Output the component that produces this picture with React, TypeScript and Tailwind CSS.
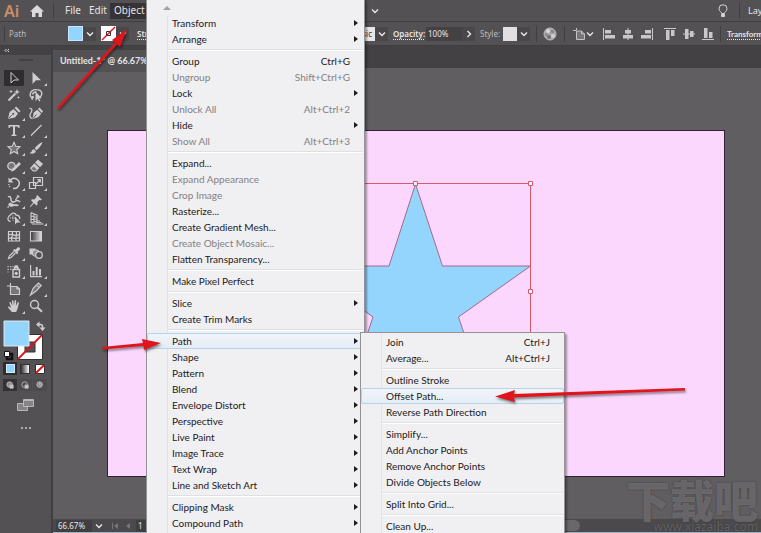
import { useState } from 'react';
import type { ReactNode } from 'react';
import clsx from 'clsx';

type Entry = { label: string; keys?: string; more?: boolean; off?: boolean } | null;

const objectMenu: Entry[] = [
  { label: 'Transform', more: true },
  { label: 'Arrange', more: true },
  null,
  { label: 'Group', keys: 'Ctrl+G' },
  { label: 'Ungroup', keys: 'Shift+Ctrl+G', off: true },
  { label: 'Lock', more: true },
  { label: 'Unlock All', keys: 'Alt+Ctrl+2', off: true },
  { label: 'Hide', more: true },
  { label: 'Show All', keys: 'Alt+Ctrl+3', off: true },
  null,
  { label: 'Expand...' },
  { label: 'Expand Appearance', off: true },
  { label: 'Crop Image', off: true },
  { label: 'Rasterize...' },
  { label: 'Create Gradient Mesh...' },
  { label: 'Create Object Mosaic...', off: true },
  { label: 'Flatten Transparency...' },
  null,
  { label: 'Make Pixel Perfect' },
  null,
  { label: 'Slice', more: true },
  { label: 'Create Trim Marks' },
  null,
  { label: 'Path', more: true },
  { label: 'Shape', more: true },
  { label: 'Pattern', more: true },
  { label: 'Blend', more: true },
  { label: 'Envelope Distort', more: true },
  { label: 'Perspective', more: true },
  { label: 'Live Paint', more: true },
  { label: 'Image Trace', more: true },
  { label: 'Text Wrap', more: true },
  { label: 'Line and Sketch Art', more: true },
  null,
  { label: 'Clipping Mask', more: true },
  { label: 'Compound Path', more: true },
];

const pathMenu: Entry[] = [
  { label: 'Join', keys: 'Ctrl+J' },
  { label: 'Average...', keys: 'Alt+Ctrl+J' },
  null,
  { label: 'Outline Stroke' },
  { label: 'Offset Path...' },
  { label: 'Reverse Path Direction' },
  null,
  { label: 'Simplify...' },
  { label: 'Add Anchor Points' },
  { label: 'Remove Anchor Points' },
  { label: 'Divide Objects Below' },
  null,
  { label: 'Split Into Grid...' },
  null,
  { label: 'Clean Up...' },
];

// every tool glyph sits on a 16x16 grid
const tools: { name: string; plain?: boolean; icon: ReactNode }[] = [
  { name: 'Selection', plain: true, icon: <path d="M5 2.500v10.500l3-3h4.500z" fill="none" stroke="currentColor" /> },
  { name: 'Direct Selection', icon: <path d="M4.500 2v12l3.500-3.800h5z" /> },
  {
    name: 'Magic Wand',
    plain: true,
    icon: (
      <>
        <path d="M2.500 13.500l7-7" stroke="currentColor" strokeWidth="2" />
        <path d="M11 2l.8 2.200 2.200.8-2.200.8-.8 2.200-.8-2.200L7.800 5l2.200-.8zM5 2.500l.5 1.500 1.500.5-1.500.5L5 6.500 4.500 5 3 4.500 4.500 4zM12.500 9l.4 1.100 1.100.4-1.100.4-.4 1.100-.4-1.100-1.100-.4 1.100-.4z" />
      </>
    ),
  },
  {
    name: 'Lasso',
    plain: true,
    icon: (
      <>
        <path d="M6 10.500C3 11 1.800 9.500 2.200 7 2.800 4 5.500 2.500 8.500 2.600c3.500 0 5.500 1.700 5.300 4.400-.2 1.500-.8 2.500-2 3.200M5 12c-1.800.8-1.800-2.500.5-2.500M4.500 7.500C5 5.500 7 4.800 8.500 5" fill="none" stroke="currentColor" strokeWidth="1.400" />
        <path d="M7.500 4.500v9.500l2.300-2.200 1.400 2.700 1.200-.6-1.200-2.600h2.600z" />
      </>
    ),
  },
  {
    name: 'Pen',
    icon: (
      <>
        <path d="M2 14l1.600-7 4-3 4.400 4.400-3 4z" />
        <path d="M8.600 3l1.500-1.500 4.400 4.400L13 7.400z" />
        <path d="M2.500 13.500l4-4" stroke="#535154" strokeWidth=".9" />
        <circle cx="7.300" cy="8.800" r="1" fill="#535154" />
      </>
    ),
  },
  {
    name: 'Curvature',
    plain: true,
    icon: (
      <>
        <path d="M4.500 14l1.200-6.500 3.500-2.700 4 4-3 3.500z" />
        <path d="M10 4l1.500-1.500 3.500 3.800L13.800 8z" />
        <path d="M1.500 3.500c3.500-.5 2.500 2.500 1.300 4.500S1 13 4.500 13.500" fill="none" stroke="currentColor" strokeWidth="1.300" />
        <path d="M5 13.500l3.500-4" stroke="#535154" strokeWidth=".9" />
      </>
    ),
  },
  { name: 'Type', icon: <path d="M2.500 3h11v3h-1.200c-.2-1.200-.6-1.600-2-1.600H9v7.300c0 .9.300 1.100 1.500 1.200V14h-5v-1.100C6.700 12.800 7 12.600 7 11.700V4.400H5.700c-1.400 0-1.800.4-2 1.600H2.500z" /> },
  { name: 'Line Segment', icon: <path d="M3 13.500L13.500 3" stroke="currentColor" strokeWidth="1.300" /> },
  { name: 'Star', icon: <path d="M8 2.300l1.700 3.900 4.300.4-3.200 2.900.9 4.200L8 11.500l-3.700 2.200.9-4.200L2 6.600l4.300-.4z" fill="#777578" stroke="currentColor" strokeWidth="1.100" /> },
  { name: 'Paintbrush', icon: <path d="M14 2.200c-2.600 1-5.500 3.600-7.300 6.300l1.800 1.800c2.700-1.900 4.900-4.900 5.900-7.700zM6 9.200c-2 .1-2 1.600-2.600 2.600-.4.7-.9 1-1.900 1.300 2.300 1.300 6 .7 6.300-2.100z" /> },
  {
    name: 'Shaper',
    icon: (
      <>
        <circle cx="5.500" cy="8" r="3.700" fill="#777578" stroke="currentColor" strokeWidth="1.300" />
        <path d="M5 13.800l1.400-3L13 4l2 2-6.700 6.600z" />
      </>
    ),
  },
  {
    name: 'Eraser',
    icon: (
      <>
        <path d="M7 4.500l3-3L15 6l-3 3.300z" />
        <path d="M6.300 5.300l5 4.600L8 13.500H5L2 10.200z" />
        <path d="M3.500 10.400l2 2.200h2l1.200-1.200-3-2.900z" fill="#777578" />
      </>
    ),
  },
  {
    name: 'Rotate',
    icon: (
      <>
        <path d="M4.300 5.200A5 5 0 1 1 7 13.200" fill="none" stroke="currentColor" strokeWidth="1.500" />
        <path d="M4 12a5 5 0 0 1-1.200-3" fill="none" stroke="currentColor" strokeWidth="1.300" strokeDasharray="1.200 1" />
        <path d="M2.500 2.500v5h5z" />
      </>
    ),
  },
  {
    name: 'Scale',
    icon: (
      <g fill="none" stroke="currentColor" strokeWidth="1.200">
        <path d="M5.500 2.500h9v8h-9zM1.500 7.500h6v6h-6z" />
        <path d="M8 9l4-4M9.500 4.700h2.800v2.800" />
      </g>
    ),
  },
  {
    name: 'Width',
    icon: (
      <>
        <path d="M2 4c2-1.500 3 .5 3 2.500S7 10 9 8.500s3-1.500 5 .5" fill="none" stroke="currentColor" strokeWidth="1.500" />
        <path d="M2 11.500c2-3 3.500-1.500 5-.5s3.500-.6 6 1.200c-2 1.600-3.500.6-5 1S4 14.800 2 11.500z" />
        <path d="M9.500 7l3-4.500M11 2.500l2.500 1.700M3 13.500l-1.500 1" stroke="currentColor" strokeWidth="1.300" />
      </>
    ),
  },
  { name: 'Puppet Warp', icon: <path d="M9.200 2l4.800 4.700-1.400.5-1.300-.2-2 2.200.2 2.500-1 .8-2.500-2.300L2.500 14l-.6-.6 3.300-4L3 7.200l.8-1 2.500.2 2.200-2.100-.1-1.400z" /> },
  {
    name: 'Shape Builder',
    icon: (
      <>
        <path d="M4.500 11.500C2 11 1.300 8.800 2.500 7 3.500 5 5 5 5.500 3.800 7 2.500 9.500 3 10 5c3 0 4 2 3.600 4" fill="none" stroke="currentColor" strokeWidth="1.300" />
        <path d="M4 8h5M7 5.500v5" stroke="currentColor" strokeWidth="1" strokeDasharray="1.200 .9" />
        <path d="M9 6.500v8l2-2h3.500z" />
      </>
    ),
  },
  {
    name: 'Perspective Grid',
    icon: (
      <g fill="none" stroke="currentColor" strokeWidth="1.100">
        <path d="M3 2.500v10.500M3 2.500l6 2.500v6L3 13M6 3.700v8.200M3 6l6 1M3 9.500l6-.5" />
        <path d="M4 14h11.500M9 11h3M8 12.500h5.500" />
      </g>
    ),
  },
  {
    name: 'Mesh',
    plain: true,
    icon: (
      <g fill="none" stroke="currentColor" strokeWidth="1.200">
        <path d="M2.500 3.500h11v9.500h-11z" />
        <path d="M2.500 7c4-2.500 6 2.500 11-.5M2.500 10.500c4-2 6 1.500 11-1M6 3.500c2.500 3-2 6 0 9.500M10 3.500c2.500 3-2 6 .5 9.500" />
      </g>
    ),
  },
  {
    name: 'Gradient',
    plain: true,
    icon: (
      <>
        <linearGradient id="tool-fade">
          <stop stopColor="#353336" />
          <stop offset="1" stopColor="#e4e2e5" />
        </linearGradient>
        <path d="M2.500 3.500h11V13h-11z" fill="url(#tool-fade)" stroke="currentColor" strokeWidth="1.100" />
      </>
    ),
  },
  {
    name: 'Eyedropper',
    icon: (
      <>
        <path d="M8 6.500L3.300 11.200 2.500 13.500l2.300-.8L9.500 8" fill="none" stroke="currentColor" strokeWidth="1.200" />
        <path d="M7 5l1.200-1 1.300.8 2-2.200c1.400-1.200 3.400.7 2.300 2.200l-2.300 2 .8 1.300-1.200 1.200z" />
      </>
    ),
  },
  {
    name: 'Blend',
    plain: true,
    icon: (
      <>
        <path d="M1.500 3.500h6v6h-6z" />
        <rect x="4.500" y="5" width="6.500" height="6" rx="2" fill="#929093" stroke="currentColor" />
        <circle cx="11" cy="10" r="3.300" fill="#535154" stroke="currentColor" strokeWidth="1.300" />
      </>
    ),
  },
  {
    name: 'Symbol Sprayer',
    icon: (
      <>
        <path d="M7 6.500h6.500V14H7zM8.500 6.200V4.500H12v1.700M8.700 3h2.500v1.500" fill="none" stroke="currentColor" strokeWidth="1.400" />
        <circle cx="10.200" cy="10.300" r="1.600" />
        <path d="M1.500 3h1.200v1.200H1.500zM4.200 3h1.200v1.200H4.200zM6.500 3h1v1h-1zM1.500 5.700h1.200v1.200H1.500zM4.200 5.700h1.200v1.200H4.200zM1.500 8.400h1v1h-1z" />
      </>
    ),
  },
  { name: 'Column Graph', icon: <path d="M2 2h1.200v11H14v1.200H2zM4.500 8h2v4.500h-2zM7.700 4h2v8.500h-2zM11 6h2v6.500h-2z" /> },
  {
    name: 'Artboard',
    plain: true,
    icon: (
      <g fill="none" stroke="currentColor" strokeWidth="1.200">
        <path d="M1 5h3.500M4.500 2v3" />
        <path d="M4.500 5.500H11L13.500 8v5.500h-9z" fill="#777578" />
        <path d="M11 5.500V8h2.500" />
      </g>
    ),
  },
  { name: 'Slice', icon: <path d="M2.500 14l2.700-6.700L10.500 2l2.700 2.600-5.100 5.500zM9.400 4.600l1.800 1.800" fill="#777578" stroke="currentColor" strokeWidth="1.200" /> },
  { name: 'Hand', icon: <path d="M5.800 14L2 9.500c-.5-.8.600-1.500 1.300-.8L5 10 3.500 5c-.2-1 1-1.300 1.400-.4L6.300 8 6 3c0-1 1.400-1 1.500 0L8 7.500l.8-4.900c.2-1 1.500-.7 1.400.2L9.900 8l1.700-3.500c.4-.8 1.600-.3 1.300.6L11.500 11l-1.400 3z" /> },
  {
    name: 'Zoom',
    plain: true,
    icon: (
      <>
        <circle cx="6.500" cy="6.500" r="4" fill="none" stroke="currentColor" strokeWidth="1.400" />
        <path d="M9.500 9.500l4.500 4.300" stroke="currentColor" strokeWidth="2" />
      </>
    ),
  },
];

// bars of the six align buttons, on a 12x12 grid
const aligns = [
  { name: 'Align left', d: 'M0 0h1v12H0zM2 2h6v3.500H2zM2 7h10v3.500H2z' },
  { name: 'Align centre', d: 'M5.500 0h1v12h-1zM3 2h6v3.500H3zM1 7h10v3.500H1z' },
  { name: 'Align right', d: 'M11 0h1v12h-1zM4 2h6v3.500H4zM0 7h10v3.500H0z' },
  { name: 'Align top', d: 'M0 0h12v1H0zM2 2h3.500v10H2zM7 2h3.500v6H7z' },
  { name: 'Align middle', d: 'M0 5.500h12v1H0zM2 1h3.500v10H2zM7 3h3.500v6H7z' },
  { name: 'Align bottom', d: 'M0 11h12v1H0zM2 0h3.500v10H2zM7 4h3.500v6H7z' },
];

const Chevron = ({ right }: { right?: boolean }) => (
  <svg viewBox="0 0 8 8" className={clsx('size-2', right && '-rotate-90')} fill="none" stroke="#e8e6e9" strokeWidth="1.400">
    <path d="M1 2.500l3 3 3-3" />
  </svg>
);

const DropButton = ({ label, right }: { label: string; right?: boolean }) => (
  <button aria-label={label} className="flex h-[14px] w-[13px] shrink-0 items-center justify-center bg-[#49474a]">
    <Chevron right={right} />
  </button>
);

const Rule = ({ className }: { className?: string }) => (
  <span className={clsx('h-4 w-px shrink-0 bg-[#403e41]', className)} />
);

const MenuList = ({ items, active, children }: { items: Entry[]; active: string; children?: ReactNode }) => (
  <ul>
    {items.map((item, i) =>
      item === null ? (
        <li key={i} className="flex h-[6px] items-center pl-[21px] pr-px">
          <span className="h-[2px] w-full border-t border-[#e0dfe1] bg-white" />
        </li>
      ) : (
        <li key={item.label} className="relative">
          <button
            disabled={item.off}
            className={clsx(
              'flex h-4 w-full items-center rounded-[2px] border pl-6 pr-[5px] text-left whitespace-nowrap',
              item.label === active ? 'border-[#b4d3ee] bg-linear-to-b from-[#f1f4f9] to-[#e5edf6]' : 'border-transparent',
              item.off ? 'text-[#838184]' : 'text-[#1c1a1d]'
            )}
          >
            <span>{item.label}</span>
            <span className={clsx('ml-auto', !item.more && 'mr-2')}>{item.keys}</span>
            {item.more && (
              <svg viewBox="0 0 4 6" className="h-[6px] w-1" fill="#1c1a1d">
                <path d="M0 0l4 3-4 3z" />
              </svg>
            )}
          </button>
          {item.label === active && children}
        </li>
      )
    )}
  </ul>
);

const Toolbar = () => {
  const [tool, setTool] = useState('Selection');
  return (
    <aside className="flex w-[53px] shrink-0 flex-col border-r-2 border-[#413f42] bg-[#535154] text-[#cfcdd0]">
      <div className="h-[9px] bg-[#434144] pl-1">
        <svg viewBox="0 0 6 9" className="h-[9px] w-[6px]" fill="none" stroke="#dddbde">
          <path d="M2.500 3L1 4.500 2.500 6M5 3L3.500 4.500 5 6" />
        </svg>
      </div>
      <div className="flex h-[14px] items-center justify-center">
        <span className="mb-1 h-[2px] w-[14px] bg-[#434144]" />
      </div>
      <div className="ml-[3px] grid h-[246px] w-[44px] grid-cols-2 place-items-center">
        {tools.map(t => (
          <button
            key={t.name}
            title={t.name}
            onClick={() => setTool(t.name)}
            className={clsx('relative flex h-4 w-5 items-center justify-center rounded-[1px]', tool === t.name && 'bg-[#2f2d30]')}
          >
            <svg viewBox="0 0 16 16" className="size-4" fill="currentColor">
              {t.icon}
            </svg>
            {!t.plain && (
              <svg viewBox="0 0 3 3" className="absolute -right-px bottom-0 size-[3px]" fill="currentColor">
                <path d="M3 0v3H0z" />
              </svg>
            )}
          </button>
        ))}
      </div>

      <svg viewBox="0 0 44 42" className="ml-[3px] mt-[5px] h-[42px] w-[44px]" fill="none">
        <path d="M14.500 14.500h25v25h-25z" fill="#fff" stroke="#333134" />
        <path d="M22 22h10v10H22z" fill="#535154" stroke="#333134" />
        <path d="M15 39L39 15" stroke="#d8151c" strokeWidth="1.800" />
        <path d="M1 1h25v25H1z" fill="#93d5fd" stroke="#e5e5e8" />
        <path d="M36 4.500h1.500a2 2 0 0 1 2 2V8" stroke="#cfcdd0" strokeWidth="1.500" />
        <path d="M36.500 1.500v6l-3.500-3zM36.500 7.500h6l-3 3.500z" fill="#cfcdd0" />
        <path d="M4 34h5v5H4z" stroke="#111" strokeWidth="2.500" />
        <path d="M1.500 31.500h5v5h-5z" fill="#fff" stroke="#111" />
      </svg>

      <div className="ml-[3px] flex gap-px">
        <button aria-label="Color" className="flex h-[13px] w-[14px] items-center justify-center bg-[#2f2d30]">
          <span className="size-[9px] border border-[#cdebff] bg-[#93d5fd]" />
        </button>
        <button aria-label="Gradient" className="flex h-[13px] w-[14px] items-center justify-center">
          <span className="size-[10px] border border-[#333134] bg-linear-to-r from-[#333134] to-white" />
        </button>
        <button aria-label="None" className="flex h-[13px] w-[14px] items-center justify-center">
          <svg viewBox="0 0 10 10" className="size-[10px]">
            <path d="M.5.5h9v9h-9z" fill="#fff" stroke="#333134" />
            <path d="M1 9l8-8" stroke="#d8151c" strokeWidth="2" />
          </svg>
        </button>
      </div>
      <div className="ml-[3px] mt-1 flex gap-px">
        {['Draw Normal', 'Draw Behind', 'Draw Inside'].map((mode, i) => (
          <button key={mode} aria-label={mode} className={clsx('flex h-3 w-[14px] items-center justify-center', i === 0 ? 'bg-[#343235]' : 'bg-[#4d4b4e]')}>
            <svg viewBox="0 0 10 10" className="size-2" fill="#8d8b8e" stroke="#c4c2c5">
              <circle cx="4.500" cy="4.500" r="3.500" fill={i === 1 ? 'none' : '#8d8b8e'} />
              {i < 2 ? <path d="M5 5h4v4H5z" fill="#c4c2c5" /> : <path d="M4.500 2v3H7z" fill="#535154" />}
            </svg>
          </button>
        ))}
      </div>
      <button aria-label="Screen mode" className="mt-2 self-center">
        <svg viewBox="0 0 17 12" className="h-3 w-[17px]" fill="#858386" stroke="#b9b7ba">
          <path d="M.5 4.500h10v7H.5z" />
          <path d="M6.500.5h10v7h-10zM6.500 1.500h10" />
        </svg>
      </button>
      <button aria-label="Edit toolbar" className="mt-4 flex gap-[2px] self-center">
        <span className="size-[2px] rounded-full bg-[#cfcdd0]" />
        <span className="size-[2px] rounded-full bg-[#cfcdd0]" />
        <span className="size-[2px] rounded-full bg-[#cfcdd0]" />
      </button>
    </aside>
  );
};

const ControlBar = () => (
  <div className="flex h-6 shrink-0 items-center overflow-hidden border-b border-[#403e41] bg-[#535154] text-[8px] whitespace-nowrap text-[#e6e4e7]">
    <Rule className="ml-1 mr-1" />
    <span className="w-[59px] shrink-0 text-[#bcbabd]">Path</span>
    <button aria-label="Fill" className="size-[15px] shrink-0 border border-[#c5e8fd] bg-[#93d5fd]" />
    <DropButton label="Fill options" />
    <button aria-label="Stroke color" className="ml-[5px] shrink-0">
      <svg viewBox="0 0 15 15" className="size-[15px]">
        <path d="M0 0h15v15H0z" fill="#fff" />
        <path d="M5.500 5.500h4v4h-4z" fill="none" stroke="#333134" />
        <path d="M1 14L14 1" stroke="#d8151c" strokeWidth="1.500" />
      </svg>
    </button>
    <DropButton label="Stroke options" />
    <button className="ml-2 w-[220px] shrink-0 text-left font-semibold underline decoration-dotted underline-offset-2">Stroke:</button>
    <span className="flex h-[14px] w-[18px] shrink-0 items-center justify-end bg-[#e8e6e9] pr-[3px] text-[#333134]">Basic</span>
    <DropButton label="Brush definition" />
    <label htmlFor="opacity" className="ml-[5px] w-[33px] shrink-0 font-semibold underline decoration-dotted underline-offset-2">Opacity:</label>
    <input id="opacity" defaultValue="100%" className="h-[14px] w-9 shrink-0 bg-[#434144] pl-[2px] outline-none" />
    <DropButton label="Opacity slider" right />
    <span className="ml-[5px] w-[23px] shrink-0 text-[#bcbabd]">Style:</span>
    <button aria-label="Style" className="size-[14px] shrink-0 bg-[#e1dfe2]" />
    <DropButton label="Style options" />
    <Rule className="mx-[6px]" />
    <button aria-label="Recolor artwork" className="shrink-0">
      <svg viewBox="0 0 14 14" className="size-[14px]">
        <circle cx="7" cy="7" r="6" fill="#aaa8ab" stroke="#b9b7ba" />
        <circle cx="5" cy="4" r="2" fill="#d9d7da" />
        <circle cx="9.500" cy="4.500" r="1.800" fill="#8b898c" />
        <circle cx="10" cy="9" r="2" fill="#d0ced1" />
        <circle cx="6" cy="10" r="2" fill="#737174" />
        <circle cx="3.300" cy="7.500" r="1.500" fill="#8b898c" />
      </svg>
    </button>
    <Rule className="mx-[7px]" />
    <button aria-label="Align to" className="flex shrink-0 items-center">
      <svg viewBox="0 0 14 14" className="size-[14px]" fill="none" stroke="#c4c2c5">
        <path d="M1 3.500h3M4.500 1v2.500" />
        <path d="M4.500 4h5l3 3v5.500h-8z" fill="#777578" />
        <path d="M9.500 4v3h3" />
      </svg>
      <Chevron />
    </button>
    <div className="ml-[9px] flex shrink-0 gap-[7px]">
      {aligns.map((a, i) => (
        <button key={a.name} aria-label={a.name} className={clsx(i === 3 && 'ml-1')}>
          <svg viewBox="0 0 12 12" className="size-3" fill="#c9c7ca">
            <path d={a.d} />
          </svg>
        </button>
      ))}
    </div>
    <Rule className="mx-[6px]" />
    <button className="shrink-0 font-['Lato',sans-serif] font-bold underline decoration-dotted underline-offset-2">Transform</button>
  </div>
);

const Artboard = () => (
  <div className="relative ml-[54px] mr-9 mt-[62px] h-[347px] border border-[#33203a] bg-[#fcd7fd]">
    <svg viewBox="0 0 236 224" className="absolute left-[190px] top-[49px] h-[224px] w-[236px]" fill="none" stroke="#d9596c">
      <path d="M117.500 4L144.500 86h88l-72 51 28 84-71-51.500L47 221l28-84L4 86h87z" fill="#93d5fd" stroke="#a9688c" />
      <path d="M3.500 3.500h229v218H3.500z" />
      <g fill="#fff">
        <path d="M1.500 1.500h4v4h-4zM115.500 1.500h4v4h-4zM230.500 1.500h4v4h-4zM230.500 109.500h4v4h-4zM1.500 109.500h4v4h-4z" />
        <path d="M1.500 219.500h4v4h-4zM115.500 219.500h4v4h-4zM230.500 219.500h4v4h-4z" />
      </g>
    </svg>
  </div>
);

const App = () => (
  <div className="relative flex h-screen flex-col overflow-hidden bg-[#605e61] font-['Noto_Sans',sans-serif]">
    <header className="flex h-[22px] shrink-0 items-center border-b border-[#403e41] bg-[#535154] text-[10px] whitespace-nowrap text-[#e6e4e7]">
      <span className="ml-1 w-[26px] text-base leading-4 font-semibold text-[#c98d6c]">Ai</span>
      <button aria-label="Home">
        <svg viewBox="0 0 14 12" className="h-3 w-[14px]" fill="#dbd9dc">
          <path d="M7 0l7 6.500h-2V12H8.500V8h-3v4H2V6.500H0z" />
        </svg>
      </button>
      <Rule className="ml-[9px] mr-[11px]" />
      <nav className="flex w-[298px] items-center">
        <button className="w-6 text-left">File</button>
        <button className="w-[21px] text-left">Edit</button>
        <button className="h-4 bg-[#353336] px-1">Object</button>
        <button className="px-2">Type</button>
      </nav>
      <button aria-label="Arrange documents" className="ml-2 flex items-center">
        <Chevron />
      </button>
      <button aria-label="Learn" className="ml-auto">
        <svg viewBox="0 0 10 14" className="h-[14px] w-[10px]" fill="none" stroke="#d5d3d6">
          <path d="M3.500 9.500C3.500 7.500 1 7.500 1 4.700a4 4 0 0 1 8 0c0 2.800-2.500 2.800-2.500 4.800z" />
          <path d="M3.500 10.500h3v2h-3z" fill="#d5d3d6" />
        </svg>
      </button>
      <Rule className="ml-[11px] mr-2" />
      <button className="w-[13px] overflow-hidden text-left text-[9px]">Layout</button>
    </header>

    <ControlBar />

    <div className="flex min-h-0 flex-1">
      <Toolbar />
      <main className="flex min-w-0 flex-1 flex-col">
        <div className="h-[22px] shrink-0 bg-[#434144]">
          <button className="h-[22px] bg-[#535154] pl-[7px] pr-3 font-['Lato',sans-serif] text-[9px] font-bold text-[#e6e4e7]">Untitled-1* @ 66.67% (RGB/Preview)</button>
        </div>
        <div className="min-h-0 flex-1 overflow-hidden">
          <Artboard />
        </div>
        <footer className="flex h-[14px] shrink-0 items-center border-b border-[#9fb3c4] bg-[#4b494c] text-[8px] text-[#e6e4e7]">
          <input aria-label="Zoom level" defaultValue="66.67%" className="ml-[3px] h-3 w-9 bg-[#403e41] pl-[2px] outline-none" />
          <button aria-label="Zoom presets" className="flex h-3 w-[14px] items-center justify-center">
            <Chevron />
          </button>
          <svg viewBox="0 0 20 8" className="ml-[6px] h-2 w-5" fill="#777578">
            <path d="M0 1h1v6H0zM6 1v6L2 4zM18 1v6l-4-3z" />
          </svg>
          <input aria-label="Artboard number" defaultValue="1" className="ml-1 h-3 w-6 bg-[#403e41] pl-[2px] outline-none" />
          <span className="ml-auto mr-[181px] h-[11px] w-[300px] rounded-full bg-[#69676a]" />
        </footer>
      </main>
    </div>

    <div className="pointer-events-none absolute right-[3px] bottom-0 text-right text-[#858386]/60">
      <p className="font-['Noto_Sans_CJK_SC',sans-serif] text-[44px] leading-[44px] font-black [text-shadow:0_0_2px_#3c3a3d]">下载吧</p>
      <p className="text-xs leading-3 [text-shadow:0_0_1px_#2c2a2d]">www.xiazaiba.com</p>
    </div>

    <div className="absolute inset-y-0 left-[146px] w-[219px] border-x border-[#949295] bg-[#f0eff1] font-['Lato',sans-serif] text-[10px] leading-[14px] shadow-[2px_0_2px_rgba(0,0,0,0.35)]">
      <span className="absolute top-4 bottom-0 left-5 w-px bg-[#e2e1e3]" />
      <div className="flex h-[15px] items-center pl-4">
        <svg viewBox="0 0 8 4" className="h-1 w-2" fill="#a3a1a4">
          <path d="M4 0l4 4H0z" />
        </svg>
      </div>
      <MenuList items={objectMenu} active="Path">
        <div className="absolute -top-px left-[213px] z-10 h-[220px] w-[205px] border border-[#949295] bg-[#f0eff1] py-px shadow-[2px_2px_2px_rgba(0,0,0,0.35)]">
          <span className="absolute inset-y-0 left-5 w-px bg-[#e2e1e3]" />
          <MenuList items={pathMenu} active="Offset Path..." />
        </div>
      </MenuList>
    </div>

    {/* pointer arrows */}
    <svg className="pointer-events-none absolute inset-0 z-20 size-full drop-shadow-[1px_2px_1px_rgba(0,0,0,0.45)]" fill="#e0141b">
      <path d="M57 107.500L115 42.500l-3-2.500 15-11-7 18-3-2.500-58.500 65z" />
      <path d="M102 347l41-4-1-4 19 4-17 7-.5-4-41 3.500z" />
      <path d="M685 388l-171 6 1-4-20 6.500 20 5.500-1-4.500 171-7z" />
    </svg>
  </div>
);

export default App;
